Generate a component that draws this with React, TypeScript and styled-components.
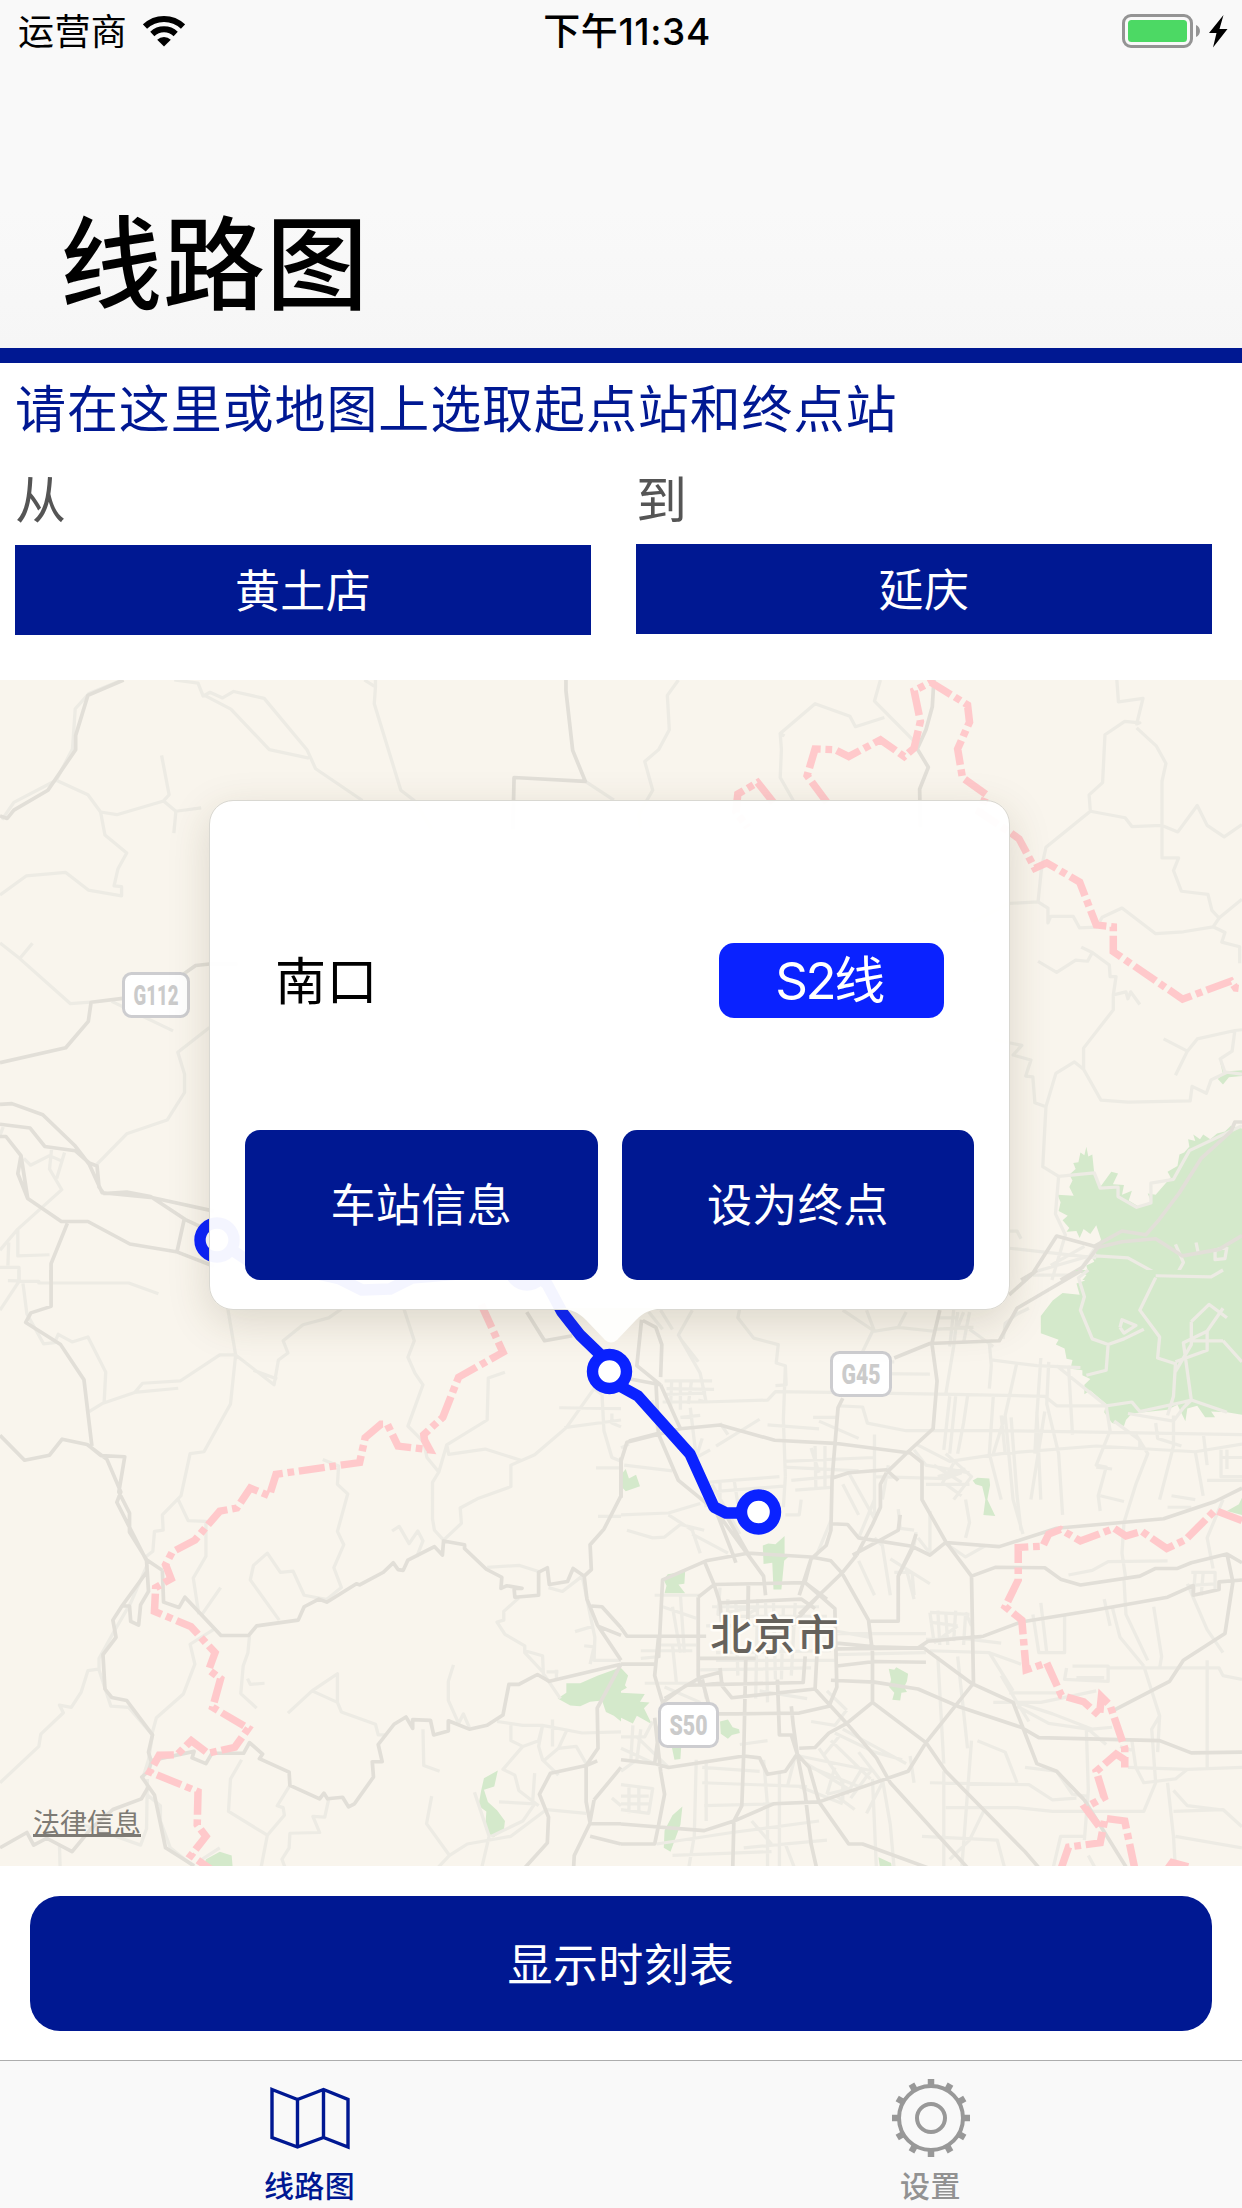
import React from "react";
import styled, { createGlobalStyle } from "styled-components";

const NAVY = "#001892";
const LINE_BLUE = "#0a22ff";
const CJK = '"Noto Sans CJK SC", sans-serif';
const MIXED = 'Inter, "Noto Sans CJK SC", sans-serif';

const GlobalStyle = createGlobalStyle`
  * { box-sizing: border-box; }
  body { margin: 0; background: #fff; }
  button { border: 0; padding: 0; margin: 0; font: inherit; letter-spacing: inherit; }
`;

const Screen = styled.div`
  width: 1242px;
  height: 2208px;
  display: flex;
  flex-direction: column;
  overflow: hidden;
  background: #fff;
  font-family: ${CJK};
  letter-spacing: 0.4px;
`;

const Header = styled.header`
  height: 363px;
  flex: none;
  display: flex;
  flex-direction: column;
  justify-content: space-between;
  background: linear-gradient(#f9f9f9 0%, #f9f9f9 60%, #f6f6f6 100%);
  border-bottom: 15px solid ${NAVY};
`;

const StatusBar = styled.div`
  height: 60px;
  display: grid;
  grid-template-columns: 1fr auto 1fr;
  align-items: center;
  padding: 0 14px 0 18px;
`;

const Carrier = styled.div`
  display: flex;
  align-items: center;
  gap: 16px;
  font-size: 36px;
  line-height: 58px;
`;

const CarrierName = styled.span`
  padding-bottom: 4px;
`;

const Clock = styled.div`
  font-family: ${MIXED};
  font-size: 37px;
  font-weight: 500;
  line-height: 60px;
  letter-spacing: 0.6px;
  padding: 2px 0 0 8px;
`;

const Power = styled.div`
  display: flex;
  justify-content: flex-end;
`;

const Title = styled.h1`
  margin: 0;
  padding: 0 0 30px 60px;
  font-size: 102px;
  line-height: 120px;
  font-weight: 500;
  letter-spacing: 1px;
`;

const Picker = styled.section`
  height: 317px;
  flex: none;
  padding: 10px 30px 0 15px;
`;

const Prompt = styled.p`
  margin: 0;
  font-size: 51px;
  line-height: 66px;
  letter-spacing: 0.900px;
  color: ${NAVY};
`;

const Fields = styled.div`
  display: flex;
  gap: 45px;
  padding-top: 25px;
`;

const Field = styled.div<{ $gap: number }>`
  flex: 1;
  display: flex;
  flex-direction: column;
  gap: ${(p) => p.$gap}px;
`;

const FieldLabel = styled.label`
  font-size: 51px;
  line-height: 66px;
  color: #555;
`;

const StationButton = styled.button`
  height: 90px;
  background: ${NAVY};
  color: #fff;
  font-size: 45px;
  line-height: 84px;
  padding-bottom: 3px;
`;

const MapView = styled.main`
  position: relative;
  height: 1186px;
  flex: none;
  overflow: hidden;
  background: #f9f5ed;
`;

const Canvas = styled.svg`
  position: absolute;
  inset: 0;
`;

const Legal = styled.a`
  position: absolute;
  left: 33px;
  bottom: 26px;
  font-size: 27px;
  line-height: 36px;
  letter-spacing: 0;
  color: #7d7a74;
  text-decoration: underline;
  text-decoration-thickness: 3px;
  text-underline-offset: 1px;
`;

const Callout = styled.div`
  position: absolute;
  left: 209px;
  top: 120px;
  width: 801px;
  height: 510px;
  display: flex;
  flex-direction: column;
  padding: 28px 35px 29px;
  border: 1px solid #d9d8d2;
  border-radius: 24px;
  background: rgba(255, 255, 255, 0.955);
  background-clip: padding-box;
  box-shadow: 0 12px 42px rgba(80, 65, 30, 0.17);
`;

const CalloutArrow = styled.svg`
  position: absolute;
  left: 346px;
  top: 507px;
`;

const CalloutInfo = styled.div`
  flex: 1;
  display: flex;
  align-items: center;
  justify-content: space-between;
  padding: 1px 30px 0;
`;

const StationName = styled.span`
  font-size: 51px;
  line-height: 66px;
  padding-bottom: 4px;
`;

const LineBadge = styled.span`
  width: 225px;
  height: 75px;
  display: flex;
  align-items: center;
  justify-content: center;
  border-radius: 15px;
  background: ${LINE_BLUE};
  color: #fff;
  font-family: ${MIXED};
  font-size: 51px;
  line-height: 66px;
  letter-spacing: -2.400px;
  padding: 2px 5px 0 0;
`;

const CalloutActions = styled.div`
  display: flex;
  gap: 24px;
`;

const ActionButton = styled.button`
  flex: 1;
  height: 150px;
  padding-bottom: 5px;
  border-radius: 15px;
  background: ${NAVY};
  color: #fff;
  font-size: 45px;
`;

const Footer = styled.div`
  height: 194px;
  flex: none;
  padding: 30px 30px 29px;
  display: flex;
`;

const TimetableButton = styled.button`
  flex: 1;
  padding-bottom: 3px;
  border-radius: 30px;
  background: ${NAVY};
  color: #fff;
  font-size: 45px;
`;

const TabBar = styled.nav`
  height: 148px;
  flex: none;
  display: flex;
  background: #f9f9f9;
  border-top: 1px solid #adadad;
`;

const Tab = styled.div<{ $active?: boolean }>`
  flex: 1;
  display: flex;
  flex-direction: column;
  align-items: center;
  padding: 11px 2px 0 0;
  font-size: 30px;
  font-weight: 500;
  line-height: 45px;
  color: ${(p) => (p.$active ? NAVY : "#929292")};
`;

/* Survey quadrants: each sheet is drawn in its own 1568-unit grid. */
type Sheet = {
  x: number;
  y: number;
  parks: string;
  minor: string;
  major: string;
  border: string;
};

const SHEETS: Sheet[] = [
  {
    x: 0,
    y: 0,
    parks: "",
    minor: `M308,0 225,35 190,75 183,180 142,262 35,320 5,365
      M142,262 222,300 254,345 265,405 320,452 298,493 288,538 307,540 307,564 223,549 166,503 66,512 0,562
      M254,345 295,352 413,316 427,300 408,197 M413,316 444,343 508,334 M444,343 439,400
      M440,0 500,8 513,42 530,32 562,47 590,30 667,48 775,182 797,232 915,315
      M513,38 583,76 680,182 780,204 M920,0 948,18 945,62 1012,288 1046,315 1090,390 M948,0 948,18
      M0,687 50,728 178,846 228,842 M50,728 82,688 M1478,265 1550,314 M282,840 437,917
      M529,908 449,973 466,1030 466,1078 422,1150 320,1186 245,1265
      M60,1250 77,1268 125,1243 158,1258 M130,1228 125,1278 156,1332 45,1435 0,1490
      M163,1235 143,1303 M45,1435 45,1505 125,1502 M0,1535 48,1535 48,1568 M22,1470 20,1530 M8,1168 0,1190`,
    major: `M312,0 222,40 191,145 191,182 121,288 35,340 18,362 0,355
      M1429,0 1429,28 1446,184 1478,265 1298,255 1295,390
      M600,742 529,742 494,746 464,768 M310,832 230,842 223,892 166,961 0,1000
      M0,1109 30,1107 108,1136 190,1218 225,1265 258,1340 380,1352 540,1388
      M0,1161 76,1171 113,1219 190,1230 225,1262 245,1270 250,1325 262,1342 320,1338 380,1350 468,1410 540,1445
      M0,1193 15,1193 53,1243 70,1355 155,1415 222,1415 328,1474 445,1494 540,1532
      M53,1243 45,1290 70,1355 M170,1420 129,1525 129,1568 M465,1410 447,1494`,
    border: "",
  },
  {
    x: 621,
    y: 0,
    parks: `M1175,1220 1170,1242 1160,1235 1155,1260 1142,1262 1148,1278 1132,1293 1140,1308 1132,1325 1143,1348 1102,1345 1110,1365 1105,1388 1128,1400 1115,1412 1132,1432 1125,1442 1150,1440 1158,1458 1168,1435 1185,1448 1200,1425 1212,1462 1190,1510 1195,1520 1175,1530 1180,1550 1165,1568 1568,1568 1568,1172 1540,1165 1525,1180 1505,1185 1488,1200 1470,1188 1462,1200 1445,1188 1450,1205 1432,1200 1435,1220 1422,1235 1410,1240 1405,1270 1380,1285 1388,1300 1350,1345 1330,1342 1338,1362 1310,1378 1282,1360 1290,1335 1265,1345 1270,1320 1242,1318 1255,1290 1238,1285 1210,1325 1195,1290 1190,1240 1180,1245Z
      M1512,995 1525,1023 1568,1020 1568,1035 1535,1038 1520,1057 1507,1043 1520,1030Z`,
    minor: `M145,0 117,40 122,130 95,182 60,213 80,288 65,315 45,352 50,385
      M655,0 640,55 740,160 M665,98 592,122 578,95 490,62 402,140 405,182 402,255 435,315 M402,140 413,146
      M1252,0 1256,57 1318,48 1302,115 1310,112 1272,108 1222,143 1216,268 1182,300 1185,343 1073,437 1062,490 1053,580 980,584 890,630
      M1302,125 1352,173 1376,218 1366,265 1366,465 1408,465 1395,498 1415,552 1482,560 1492,602 1510,622 1568,573
      M1185,343 1273,360 1290,383 1366,380 1406,397 1455,328 1480,380 1523,410 1568,378
      M1053,580 1078,596 1078,635 1085,618 1142,618 1158,648 1200,646 1215,620 1265,596 1350,663 1420,658 1495,645 1525,660 1517,685 1562,697 1562,740 M1495,645 1510,622
      M1053,735 1100,764 1148,732 1178,735 1190,712 1162,698 M1190,712 1233,745 1235,775 1250,775 1243,823 1275,815 1280,833 1287,815 1310,848 M1243,823 1243,862 1168,962 1168,1017 1212,1098 1280,1103 1437,1100 1442,1062 1478,1080 1490,1045 1530,1025 1568,1030
      M1168,1017 1145,998 1098,1028 1073,1115 1065,1272 1105,1297 1195,1288 1210,1328 1255,1325 1255,1350 1302,1378 1338,1367 1338,1315 1395,1305 1435,1230 1568,1165
      M1568,914 1550,916 1455,938 1430,970 1370,938 M1430,970 1400,1033 M1550,916 1543,970 1513,990 1525,1025
      M945,940 1012,955 990,980 1035,993 1022,1035 1040,1037 1045,1105 1073,1115
      M1105,1297 1097,1395 1122,1450 1088,1568 M980,1485 1070,1495 1200,1510 M980,1440 1000,1440 1010,1460
      M1040,1548 1200,1500 M1085,1530 1170,1480 M1040,1555 1140,1555 M1160,1540 1200,1480
      M1200,1505 1280,1510 1350,1550 1405,1550 1420,1522 1400,1475 M1530,1482 1500,1490 1500,1515 1525,1512 1530,1482 M1452,1470 1458,1500`,
    major: `M790,0 786,70 770,130 748,180 776,228 754,285 756,385
      M1568,1155 1550,1155 1540,1180 1465,1250 1410,1340 1355,1415 1325,1450 1265,1440 1195,1480 1100,1453 1040,1550 1010,1568
      M1195,1485 1265,1468 1350,1460 1418,1505 1510,1488 1568,1452 M1210,1475 1165,1535 1110,1568`,
    border: `M385,320 345,268 295,298 290,345 320,385
      M520,320 470,250 490,180 540,182 575,200 655,156 715,200 740,178 756,108 740,28 782,6 875,65 880,110 850,180 862,255 923,300 905,345 985,400 1005,415 1045,492 1075,478 1158,528 1200,640 1243,645 1243,710 1418,834 1540,787 1552,805 1568,807`,
  },
  {
    x: 0,
    y: 590,
    parks: `M1430,1080 1465,1080 1510,1060 1568,1038 1568,1180 1550,1165 1530,1155 1520,1125 1490,1128 1465,1140 1440,1138 1408,1120 1430,1105Z
      M1257,1308 1222,1328 1215,1360 1208,1400 1228,1415 1225,1460 1245,1483 1272,1465 1275,1440 1255,1412 1232,1390 1222,1358 1248,1350Z
      M555,1520 585,1530 588,1568 510,1568 520,1540Z`,
    minor: `M48,0 48,30 0,105 M20,28 98,30 98,34 325,34 400,62 M58,35 68,115 110,193 138,190 147,168 182,188 222,175 267,267 263,345 M225,370 260,348 340,320 450,309 M340,320 360,296 455,290 555,222 595,222 575,100
      M595,222 582,350 515,475 480,480 457,590 410,640 412,680 390,683 386,735 365,752
      M595,222 692,300 703,235 727,217 715,185 765,143 830,125 865,100 M640,262 700,285
      M1020,102 1046,185 1030,228 1048,270 1068,300 1030,408 1070,450 1078,490 1108,528 1092,555 1092,650 1097,680 1120,706 1165,662 1162,622 1205,598 1290,566 1290,510 1350,483 1430,412 1500,310 1520,325
      M1275,267 1233,282 1230,392 1128,457 1133,482 1225,468 1315,497 M1128,457 1108,528
      M815,495 855,512 852,560 878,585 852,683 868,718 843,778 862,830 820,865
      M450,600 475,655 520,657 520,748 488,805 502,900 M557,830 510,900
      M705,915 632,810 640,772 675,740 708,790 740,787 768,850 830,862
      M990,682 1008,670 1033,715 1055,682 1068,708 1052,750
      M1230,777 1312,772 1360,788 M1310,857 1272,892 1272,915 1255,920 1275,952 1325,982 1325,1000 1370,1050 M1325,995 1370,1008 1372,1055 1415,1120
      M545,936 480,978 492,1030 463,1108 395,1170 383,1215
      M630,957 626,1000 614,1035 608,1107 648,1145 M625,1068 632,1083 668,1080
      M727,1158 788,1100 852,1055 852,1130 M788,1100 852,1130 862,1155 948,1187 955,1215 975,1215
      M1145,1032 1132,1075 1132,1125 1158,1185 1170,1160 1185,1195 M1068,1200 1070,1295 1110,1310
      M248,1043 222,1047 205,1103 180,1143 150,1137 160,1157 103,1213 98,1245 0,1340
      M372,770 330,870 285,950 250,1015 250,1045 280,1140 325,1143 385,1215 375,1280 360,1330
      M610,1280 582,1330 577,1415 675,1477 658,1568 M675,1477 718,1425 715,1405 700,1400 733,1345
      M830,1383 820,1430 790,1428 807,1470 732,1472 730,1510 712,1540 722,1568
      M1090,1375 1077,1447 1135,1530 1180,1500 1290,1480 1380,1410 1480,1420 M1135,1530 1100,1568
      M1198,1365 1235,1480 1215,1568 M1260,1390 1350,1395 1320,1440 1240,1480
      M1290,1190 1290,1230 1320,1245 1360,1230 1370,1190 1320,1190 1255,1180 M1370,1190 1470,1210 1568,1207 M1370,1190 1360,1245 1370,1280 1410,1320
      M1395,1175 1395,1245 M1410,1250 1455,1245 1480,1290 M1320,1245 1270,1305 1300,1320 1310,1360 1360,1400 M1350,1315 1345,1390 M1410,1250 1370,1285 M1430,1205 1410,1250
      M1385,830 1420,840 1470,800 M1470,800 1502,960 1500,1020 1568,1020 M1452,945 1500,930 M1475,982 1500,985 1490,1030 M1380,1050 1410,1050 M1405,1045 1405,1068 M1545,1380 1568,1400
      M1520,325 1525,420 1545,490 1568,500 M1412,360 1568,362 M1425,412 1568,392 M1505,517 1568,517 M1510,644 1568,644 M1545,375 1545,400 1568,410
      M370,1370 405,1400 405,1440 430,1510 500,1568 M372,1330 370,1460 355,1503 210,1450 M150,1500 152,1568 M510,1540 555,1510`,
    major: `M129,0 129,95 78,112 65,137 153,195 212,287 232,460 M0,432 62,497 125,484 157,442 220,456 255,485 315,488 300,580 327,635 327,685 370,757 410,785
      M220,456 270,495 305,580 295,607 370,760 375,840 355,875 350,928 330,918 327,878 308,878 285,915 293,960 260,1005 265,1095 282,1117 320,1125 385,1215 375,1260 382,1285 375,1310 358,1325 390,1372 418,1510 490,1557
      M370,790 308,878 M410,785 413,868 452,882 467,855 558,955 628,955 648,930 753,915 768,880 805,860 825,868 900,820 908,823 968,790 993,765 1005,783 1018,785 1030,758 1097,723 1117,745 1120,708 1173,718 1173,728 1228,782 1267,803 1265,832 1280,825 1318,832 1298,832 1300,855 1360,850 1360,790 1382,778 1387,822 1433,814 1447,780 1475,800 1493,783 1490,718 1525,677 1568,590 1568,490
      M1475,800 1482,860 1508,927 1568,1020 M1493,878 1520,880 1568,935 M1508,930 1568,955
      M383,1282 490,1258 485,1275 520,1290 535,1263 615,1263 630,1235 663,1265 655,1277 730,1312 732,1347 807,1382 818,1367 827,1382 865,1378 880,1403 895,1395 943,1325 940,1285 965,1285 955,1240 995,1187 1025,1168 1042,1198 1042,1175 1087,1177 1095,1215 1132,1205 1132,1178 1185,1200 1230,1190 1270,1163 1285,1083 1310,1083 1357,1057 1387,1075 1568,1030
      M1568,1030 1508,1145 1510,1250 1480,1295 1390,1315 1362,1370 1385,1430 1382,1497 1320,1568
      M1480,1295 1480,1390 1490,1445 1450,1530 1448,1568 M1490,1447 1568,1447 M1500,1385 1568,1300 M1490,1480 1568,1500 M1480,1295 1508,1283 M1500,1385 1490,1440
      M0,1510 68,1470 85,1503 118,1485 182,1520 230,1460 285,1410 357,1382 375,1350
      M1330,110 1375,185 1445,172`,
    border: `M1215,90 1270,215 1158,280 1118,385 1070,430 1072,445 1085,470 1005,460 978,403 962,403 922,438 908,503 697,534 680,590 632,570 598,622 555,630 492,706 435,737 418,770 432,807 393,830 390,892 482,932 543,1000 527,1045 557,1068 537,1143 627,1198 593,1247 525,1263 483,1230 447,1267 402,1268 378,1312 500,1363 498,1450 520,1480 482,1530 535,1568`,
  },
  {
    x: 621,
    y: 590,
    parks: `M1145,0 1180,15 1170,28 1150,35 1158,65 1115,60 1090,80 1060,120 1060,165 1105,182 1098,195 1120,205 1125,232 1140,235 1135,258 1165,262 1165,275 1185,285 1170,300 1170,325 1185,315 1225,350 1220,372 1240,400 1270,408 1275,392 1290,375 1380,365 1405,352 1425,395 1430,362 1455,355 1475,385 1500,385 1490,370 1530,372 1568,378 1568,0Z
      M12,520 20,545 38,535 48,565 12,578 0,565 0,535Z
      M358,720 372,715 390,717 413,695 413,745 422,750 412,760 405,835 385,835 382,765 360,768Z
      M118,795 162,788 160,820 145,822 162,845 110,845 115,825 108,810Z
      M888,550 900,543 930,545 932,562 925,600 945,643 915,640 920,600 912,565 895,560Z
      M676,1042 690,1045 695,1038 725,1055 722,1075 715,1090 722,1103 708,1105 705,1125 685,1123 690,1105 677,1090 682,1070Z
      M0,1040 18,1060 10,1085 15,1092 0,1100Z M0,1105 60,1108 48,1128 72,1130 58,1145 78,1187 40,1165 30,1185 0,1170Z
      M250,1180 270,1175 282,1195 298,1200 300,1210 280,1215 270,1225 252,1212Z M128,1245 152,1245 150,1278 135,1280Z
      M155,1402 150,1450 125,1520 108,1510 110,1465 130,1425Z M650,1535 682,1550 685,1568 655,1568Z
      M1568,595 1560,612 1530,630 1568,640Z`,
    minor: `M100,105 130,155 M70,110 105,155 M180,105 145,170 200,270 215,345 195,340 M150,180 195,240 M300,100 295,125 335,178 397,195 392,243 415,250 417,300 390,302
      M110,290 230,290 M115,310 235,312 M108,325 215,322 M128,290 125,360 M150,290 150,365 M178,290 170,350 M105,345 210,345 370,340 390,318 530,320 M415,250 410,390 415,540
      M80,340 95,430 M150,385 200,380 M175,360 190,490 205,440 M240,460 350,390 M250,400 270,430 M190,490 225,470
      M370,405 500,415 M485,385 545,385 M500,395 600,440 M530,320 840,325 1070,330 1100,355 1225,355 M550,355 610,358 622,400 720,420 960,420 1270,425 1568,430
      M605,245 690,240 M580,270 780,272 M635,160 600,235 M560,105 640,160 700,150 720,110 M640,160 620,105 M700,150 790,160
      M410,500 640,490 M410,515 600,525 M415,540 410,620 M215,555 400,540 M225,580 410,565 M250,550 250,640 M285,545 295,610 M210,560 215,620 M480,465 500,530 M490,460 492,570 M515,460 515,570 M430,550 530,540 M440,575 530,568
      M640,430 640,640 M675,510 660,600 M560,560 600,640 M575,530 640,650 M640,540 820,545 860,530 M415,640 450,640 455,600
      M8,510 130,525 M0,640 120,635 200,610 M15,680 80,700 110,698 150,665 210,680 M120,640 180,680 200,740 M180,690 270,740 M230,560 300,690
      M850,110 840,200 820,325 M880,110 865,190 M840,105 830,200 M865,110 850,150 890,150 M790,155 880,150 M800,125 850,125 M1030,100 1000,115 970,140 965,180 M880,155 940,200 M930,190 935,250 930,310
      M935,235 1050,250 1160,255 M1000,240 970,380 940,480 M1060,230 1050,380 1045,480 M1080,240 1075,350 1105,480 1115,640 M1130,250 1140,430 M1100,250 1225,355
      M940,330 930,480 960,600 M970,380 990,600 1015,690 M985,385 1000,590 1010,680 M960,380 970,480 M1050,370 1060,600 M1070,370 1035,600 M960,480 1200,460 1450,475 1568,455 M845,330 830,480 M875,330 865,400 850,480 M830,330 815,470
      M740,470 770,510 880,530 M745,455 830,500 960,480 M820,480 885,540 840,600 M790,510 860,555 M770,560 880,560 M840,505 810,560 M820,560 860,590 M800,540 870,520
      M1225,355 1235,420 1200,510 1225,515 1205,590 1210,630 M1210,590 1270,605 M1200,515 1240,520 M1300,430 1330,480 1300,560 1270,660 M1245,395 1310,445 1310,470 M1350,400 1355,440 1415,460 M1395,380 1395,460 1360,600 M1280,375 1395,395 1420,360
      M1515,470 1515,540 1568,540 M1530,470 1530,520 M1515,490 1568,490 M1470,425 1480,510 M1450,475 1470,590 M1480,550 1568,550 M1390,590 1450,600 M1380,620 1440,620
      M1180,0 1155,20 1170,70 1160,105 1190,180 1230,195 1270,180 1320,155 M1230,195 1225,262 1175,275 M1260,150 1265,130 1300,145 1270,165 1260,150 M1350,20 1310,105 1360,175 1355,230 1400,245 1395,330 1380,380 M1350,15 1490,18 1520,0 M1440,135 1440,195 1400,265 M1440,135 1485,90 1530,125 M1520,100 1480,160 1480,210 1400,240 M1480,160 1420,190 1440,340 1420,360 M1520,185 1440,185 M1520,185 1568,240 M1440,340 1530,372
      M1225,355 1290,345 1310,370 1420,345 1440,340
      M530,655 490,755 M640,600 600,700 M700,625 705,675 740,680 M745,685 740,720 M780,630 780,740 750,700 M640,700 660,720 680,850 M600,760 640,850 M690,790 735,790 740,850 M720,780 740,860 M820,715 870,750 920,720 M680,755 780,820
      M780,895 880,900 M780,895 790,970 M800,890 805,980 M820,895 825,980 M845,890 840,970 M870,900 865,980 M780,920 850,930 M770,965 910,960 M840,960 960,975 M780,995 930,1000 1010,1030 M870,895 885,930 M850,930 790,975
      M85,850 200,850 M105,880 190,910 M150,850 160,1000 M130,880 150,1000 M50,995 180,995 M50,1015 100,1010 M100,980 190,980 M60,1080 190,1080 M110,1090 200,1130 M130,980 140,1080
      M250,830 245,900 340,880 M320,820 320,900 350,880 M250,905 520,905 M230,880 500,880 M215,930 530,925 M270,860 265,1020 M290,870 295,1060 M345,860 340,1120 M365,870 370,1130 M385,870 390,1070 M410,880 405,1070 M440,870 430,1060 M240,1000 530,995 M240,1020 540,1020 M200,1045 480,1040 M205,1065 215,1120 M350,1100 470,1120 M460,900 500,960 M520,940 630,960 M545,950 770,950 M540,1005 770,1000
      M300,1240 370,1230 M0,1220 60,1220 80,1180 M30,1190 25,1280 M0,1250 85,1290 M50,1200 40,1280 0,1310 M40,1220 120,1300 M0,1345 80,1355 70,1420 0,1410 M0,1375 70,1375 M0,1395 70,1395 M20,1350 20,1420 M45,1350 45,1420
      M190,1280 185,1480 170,1568 M215,1280 215,1440 M205,1340 470,1350 M205,1300 350,1310 M210,1400 390,1395 M360,1280 370,1400 370,1568 M400,1310 400,1568 M440,1270 420,1350 M450,1270 640,1310 M460,1285 580,1360 M480,1300 600,1350 M500,1250 560,1340 560,1390 M540,1210 640,1260 710,1280 M530,1230 630,1330 M560,1200 720,1290 M610,1300 570,1370 M630,1310 580,1380 M540,1300 520,1370 M550,1220 510,1270 M520,1370 580,1355 M545,1375 590,1410
      M635,1330 645,1568 M660,1330 680,1450 690,1568 M600,1260 660,1340 620,1420 M450,1350 560,1395 M90,1500 280,1470 500,1440 M130,1530 380,1520 M310,1510 520,1490 M415,1500 440,1568 M330,1440 380,1500
      M730,1270 740,1340 M800,1010 815,1290 M780,1340 1030,1345 1090,1385 1150,1380 M815,1310 815,1568 M850,1010 875,1250 M885,1230 860,1568 M820,1405 1000,1405 1090,1415 1320,1415 1350,1340 1340,1200 1360,1165 M920,1405 880,1490 830,1540 M760,1480 950,1490 970,1568
      M900,1230 970,1260 1000,1340 M1000,1130 1090,1160 1190,1200 1240,1195 M940,1130 1060,1130 1200,1100 M980,1105 1110,1105 M960,1060 1000,1130 1030,1180 M930,1000 990,1100 M1000,1140 1080,1185 1180,1200 1225,1240
      M1020,1300 1100,1310 1140,1370 1175,1375 M1175,1200 1180,1360 1170,1490 M1290,1230 1300,1300 1320,1340 1400,1330 1430,1305 1568,1300 M1290,1255 1260,1245 M1280,1300 1430,1305 M1380,1340 1395,1480 1400,1568 M1395,1415 1520,1410 1568,1455 M1480,1020 1480,1305 M1400,1480 1568,1510 M1395,1360 1430,1400 1510,1410 M1170,1480 1110,1480 1090,1568
      M1125,1040 1120,1070 1230,1075 1230,1035 1140,1035 M1150,1065 1220,1065 M1230,1040 1510,1040 1520,1060 1568,1070 M1240,880 1260,960 1320,1035 M1220,860 1235,930 M1270,810 1275,900 1330,1020 M1320,1035 1360,1165 1355,1260 M1345,880 1365,1010 1360,1040 M1060,870 1075,1000 1120,1000 1120,900 M1040,900 1055,1000 1075,1000 M1430,820 1480,940 1520,1000
      M1130,797 1190,785 1230,762 1380,760 M1440,790 1500,790 1500,840 M1450,790 1445,850 M1470,790 1465,850 M1430,825 1500,820 M1495,780 1480,700 1520,600 M1270,660 1265,740 1275,810
      M1180,1530 1200,1568 M870,700 880,660 870,600 M520,1100 570,1150 M480,1180 540,1190 570,1150 M0,465 20,455`,
    major: `M52,130 40,250 100,300 M55,132 88,150 103,195 100,280 M100,300 0,280 M88,290 95,430 145,550 240,630 285,750 M100,300 150,415 250,405 388,445 540,453 730,478 760,503 760,600 820,710 885,800
      M150,415 15,450 0,500 0,595 M100,425 20,447 M980,65 1050,0 M1165,0 1000,100 955,185 780,192 690,230 M805,105 785,192 798,290 788,415 725,475 675,525 M560,335 548,360 533,545 530,680 518,720 480,755 450,850
      M530,545 575,530 670,522 700,550 M670,530 655,560 655,620 635,665 595,745 M705,640 700,680 585,745 M530,663 572,665 600,700 735,722 745,690 M735,722 780,745 820,712 955,723 1100,675 1370,650 1500,605 1568,570
      M735,730 700,800 700,918 630,918 M735,725 700,800 M285,750 290,765 M240,630 360,800 365,850 M265,640 320,740
      M0,935 15,957 215,957 M95,957 95,1010 105,810 215,760 320,740 480,750 530,760 558,792 625,915 635,1000 635,1130 770,1235 820,1310 1020,1520 1060,1568
      M210,760 235,822 250,870 255,930 M195,855 235,822 465,817 540,885 545,1090 525,1140 450,1158 290,1160 230,1160 M195,855 195,1060 200,1085 M250,870 455,860 490,885 M322,820 320,930 M195,1015 340,1015
      M595,745 558,792 500,850 430,930 M465,817 520,860 M500,850 450,900 M480,755 465,815
      M0,1030 90,1030 M95,957 85,1060 105,1130 85,1290 0,1280 M105,1130 165,1085 460,1078 465,1010 M200,1085 250,1080 280,1118 490,1095 495,1000 M250,1040 255,1085 M315,1020 310,1260 M110,1120 200,1065 255,1050 M205,1070 225,1150 M395,1070 400,1215 430,1215 445,1265 M430,1140 435,1190 445,1265
      M490,1095 570,1185 645,1275 680,1340 880,1568 M545,975 640,985 750,988 775,970 915,957 1010,920 1190,890 1380,855 1445,825 1445,850 1510,835 1510,815 1568,810
      M545,990 765,988 885,1080 990,1130 1050,1290 1100,1310 1170,1385 1280,1568 M545,1035 640,1023 770,1025 M885,798 890,1080 770,1235 725,1310 500,1390 M285,1440 210,1465 0,1448
      M885,800 945,777 1070,778 1110,808 1160,823 1310,800 1350,780 1405,780 1440,765 1530,742 1568,765 M1530,742 1545,815 1525,950 1420,1020 1385,1075 1245,1150
      M530,1072 640,1077 750,1095 850,1140 1010,1195 1055,1222 1360,1230 1440,1262 1568,1260 M635,1130 570,1185 525,1210 490,1248 450,1250 M445,1265 475,1300 500,1390 575,1500 610,1500 790,1568 M445,1265 465,1370 480,1500 495,1568 M445,1265 415,1310 370,1318 350,1275 310,1270 120,1300 85,1290
      M85,1170 100,1310 110,1370 95,1450 85,1500 0,1500 M310,1260 305,1400 285,1440 282,1568 M500,1390 385,1395 285,1440`,
    border: `M1568,655 1500,628 1425,705 1378,728 1315,683 1275,695 1245,675 1160,708 1110,678 1080,690 1065,722 1003,725 1003,810 970,880 1012,915 1023,1045 1075,1027 1112,1112 1168,1128 1208,1165 1213,1115 1235,1138 1272,1250 1272,1300
      M1272,1280 1250,1265 1200,1310 1220,1378 1172,1405 1208,1455 M1110,1568 1130,1508 1210,1497 1222,1433 1272,1440 1298,1568 M1378,1568 1392,1548 1440,1562`,
  },
];

const SX = 621 / 1568;
const SY = 600 / 1568;

const MapSheet = ({ sheet }: { sheet: Sheet }) => (
  <g
    transform={`translate(${sheet.x} ${sheet.y}) scale(${SX} ${SY})`}
    fill="none"
    strokeLinejoin="round"
  >
    <path d={sheet.parks} fill="#d4e9cb" />
    <path d={sheet.minor} stroke="#edebe4" strokeWidth="8.4" />
    <path d={sheet.major} stroke="#e2dfd8" strokeWidth="9.4" />
    <path d={sheet.border} stroke="#ffc9cb" strokeWidth="19" strokeDasharray="66 12 17 12" strokeLinejoin="miter" />
  </g>
);

type ShieldProps = { x: number; y: number; w: number; label: string };

const RoadShield = ({ x, y, w, label }: ShieldProps) => (
  <g>
    <rect x={x + 1.5} y={y + 1.5} width={w - 3} height={43} rx={8} fill="#fff" stroke="#cdcdd0" strokeWidth={3} />
    <text
      x={x + w / 2}
      y={y + 33}
      textAnchor="middle"
      textLength={w - 23}
      lengthAdjust="spacingAndGlyphs"
      fontFamily="Roboto, sans-serif"
      fontWeight={900}
      fontSize={28}
      letterSpacing={0}
      fill="#cbcbcb"
    >
      {label}
    </text>
  </g>
);

const StationPin = ({ x, y }: { x: number; y: number }) => (
  <circle cx={x} cy={y} r={17} fill="#fff" stroke={LINE_BLUE} strokeWidth={11.4} />
);

const WifiIcon = () => (
  <svg width="42" height="32" viewBox="0 0 42 32">
    <g fill="none" stroke="#000" strokeWidth="6">
      <path d="M2 11.5a27.5 27.5 0 0 1 38 0" />
      <path d="M9.3 19a17 17 0 0 1 23.4 0" />
    </g>
    <path d="M21 31.5l-6.8-6.8a10 10 0 0 1 13.6 0z" />
  </svg>
);

const BatteryIcon = () => (
  <svg width="106" height="36" viewBox="0 0 106 36">
    <rect x="1.5" y="2.5" width="68" height="31" rx="7.5" fill="none" stroke="#949494" strokeWidth="3" />
    <rect x="6" y="7" width="59" height="22" rx="3.5" fill="#4cd964" />
    <path d="M74 12c5.300 2 5.300 10 0 12z" fill="#949494" />
    <path d="M101.500 2L87 20h7.500L91 34.500 105.500 16h-8z" />
  </svg>
);

const GEAR_TEETH = Array.from({ length: 12 }, (_, i) => i * 30);

export default function App() {
  return (
    <Screen>
      <GlobalStyle />
      <Header>
        <StatusBar>
          <Carrier>
            <CarrierName>运营商</CarrierName>
            <WifiIcon />
          </Carrier>
          <Clock>下午11:34</Clock>
          <Power>
            <BatteryIcon />
          </Power>
        </StatusBar>
        <Title>线路图</Title>
      </Header>

      <Picker>
        <Prompt>请在这里或地图上选取起点站和终点站</Prompt>
        <Fields>
          <Field $gap={15}>
            <FieldLabel>从</FieldLabel>
            <StationButton>黄土店</StationButton>
          </Field>
          <Field $gap={14}>
            <FieldLabel>到</FieldLabel>
            <StationButton>延庆</StationButton>
          </Field>
        </Fields>
      </Picker>

      <MapView>
        <Canvas width="1242" height="1186" viewBox="0 0 1242 1186">
          {SHEETS.map((s) => (
            <MapSheet key={`${s.x}-${s.y}`} sheet={s} />
          ))}
          <RoadShield x={122} y={292} w={68} label="G112" />
          <RoadShield x={830} y={671} w={62} label="G45" />
          <RoadShield x={658} y={1022} w={61} label="S50" />
          <text
            x={775}
            y={970}
            textAnchor="middle"
            fontFamily={CJK}
            fontWeight={500}
            fontSize={42}
            letterSpacing={1.2}
            fill="#66625c"
            stroke="#fffdf8"
            strokeWidth={5}
            strokeLinejoin="round"
            paintOrder="stroke"
          >
            北京市
          </text>
          <path
            d="M217 560L250 582L300 590L340 599L362 610L390 609L412 598L527 588L547 604L562 632L580 655L609 683L609 700L638 716L690 774L714 827L726 833L759 833"
            fill="none"
            stroke={LINE_BLUE}
            strokeWidth="11.500"
            strokeLinejoin="round"
          />
          <StationPin x={217} y={560} />
          <StationPin x={527} y={588} />
          <StationPin x={609.500} y={691.500} />
          <StationPin x={758.500} y={832} />
        </Canvas>
        <Legal>法律信息</Legal>
        <Callout>
          <CalloutInfo>
            <StationName>南口</StationName>
            <LineBadge>S2线</LineBadge>
          </CalloutInfo>
          <CalloutActions>
            <ActionButton>车站信息</ActionButton>
            <ActionButton>设为终点</ActionButton>
          </CalloutActions>
          <CalloutArrow width="110" height="38" viewBox="0 0 110 38">
            <path d="M0 0C16 1 22 4 30 12L49 32Q55 37 61 32L80 12C88 4 94 1 110 0Z" fill="#fefefc" />
          </CalloutArrow>
        </Callout>
      </MapView>

      <Footer>
        <TimetableButton>显示时刻表</TimetableButton>
      </Footer>

      <TabBar>
        <Tab $active>
          <svg width="92" height="90" viewBox="0 0 92 90" fill="none" stroke={NAVY} strokeWidth="3.400">
            <path d="M8 17.500L33.500 27.500L59.500 17.500L84 27.500V75L59.500 65.500L33.500 75L8 65.500ZM33.500 27.500V75M59.500 17.500V65.500" />
          </svg>
          线路图
        </Tab>
        <Tab>
          <svg width="92" height="90" viewBox="0 0 92 90" fill="none" stroke="#989898">
            <circle cx="46" cy="46" r="32" strokeWidth="4" />
            <circle cx="46" cy="46" r="14" strokeWidth="4" />
            {GEAR_TEETH.map((a) => (
              <path key={a} d="M46 7V14" strokeWidth="6.500" transform={`rotate(${a} 46 46)`} />
            ))}
          </svg>
          设置
        </Tab>
      </TabBar>
    </Screen>
  );
}
